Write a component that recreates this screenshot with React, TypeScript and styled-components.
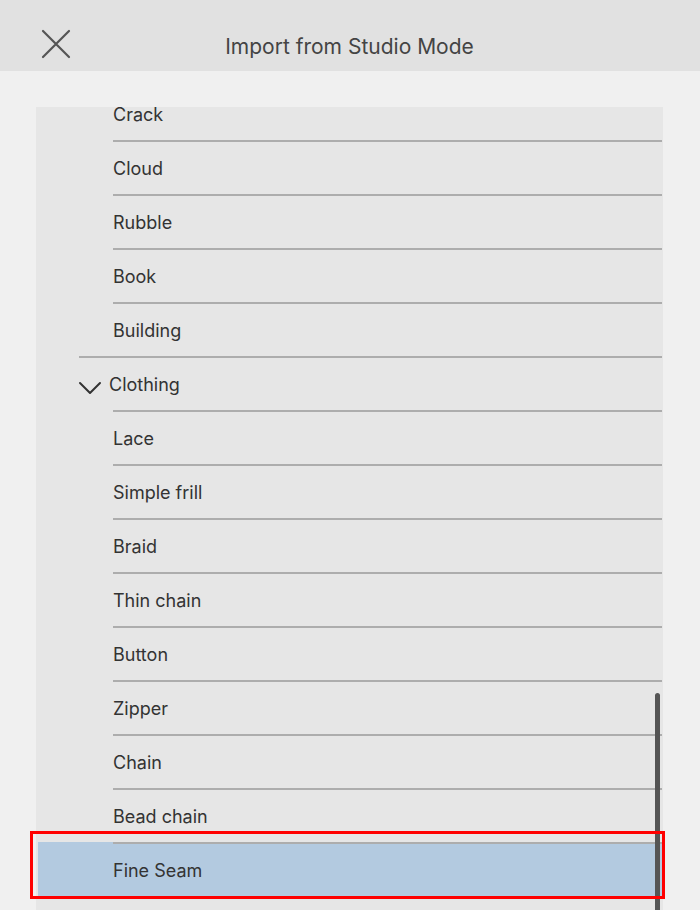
import React from 'react';
import styled, { createGlobalStyle } from 'styled-components';

const GlobalStyle = createGlobalStyle`
  html, body {
    margin: 0;
    padding: 0;
    background: #f0f0f0;
    font-family: Inter, "Noto Sans", "Liberation Sans", sans-serif;
  }
`;

type Item = { label: string; level: 'group' | 'child'; open?: boolean; selected?: boolean };

const items: Item[] = [
  { label: 'Crack', level: 'child' },
  { label: 'Cloud', level: 'child' },
  { label: 'Rubble', level: 'child' },
  { label: 'Book', level: 'child' },
  { label: 'Building', level: 'child' },
  { label: 'Clothing', level: 'group', open: true },
  { label: 'Lace', level: 'child' },
  { label: 'Simple frill', level: 'child' },
  { label: 'Braid', level: 'child' },
  { label: 'Thin chain', level: 'child' },
  { label: 'Button', level: 'child' },
  { label: 'Zipper', level: 'child' },
  { label: 'Chain', level: 'child' },
  { label: 'Bead chain', level: 'child' },
  { label: 'Fine Seam', level: 'child', selected: true },
];

function App() {
  return (
    <Page>
      <GlobalStyle />
      <Header>
        <CloseButton aria-label="Close">
          <svg width="30" height="30" viewBox="0 0 30 30">
            <path d="M2 2 L28 28 M28 2 L2 28" stroke="#555" strokeWidth="2.2" strokeLinecap="round" />
          </svg>
        </CloseButton>
        <Title>Import from Studio Mode</Title>
      </Header>

      <Body>
        <Panel>
          <List>
            {items.map((item) => (
              <Row key={item.label} $selected={item.selected}>
                <Cell $group={item.level === 'group'}>
                  {item.level === 'group' && (
                    <Chevron viewBox="0 0 24 16" width="24" height="16">
                      <path d="M2 3 L12 13 L22 3" fill="none" stroke="#333" strokeWidth="2" strokeLinecap="round" strokeLinejoin="round" />
                    </Chevron>
                  )}
                  <Label>{item.label}</Label>
                </Cell>
              </Row>
            ))}
          </List>
          <ScrollThumb />
        </Panel>
        <Highlight />
      </Body>
    </Page>
  );
}

export default App;

const Page = styled.div`
  display: flex;
  flex-direction: column;
  height: 100vh;
  overflow: hidden;
`;

const Header = styled.div`
  height: 71px;
  flex-shrink: 0;
  box-sizing: border-box;
  padding-top: 22px;
  background: #e1e1e1;
  display: flex;
  align-items: center;
  justify-content: center;
  position: relative;
`;

const CloseButton = styled.div`
  position: absolute;
  left: 41px;
  top: 29px;
  width: 30px;
  height: 30px;
  display: flex;
`;

const Title = styled.div`
  font-size: 21px;
  color: #444;
  margin-left: -1px;
`;

const Body = styled.div`
  flex: 1;
  display: flex;
  padding: 36px 37px 0 36px;
  position: relative;
  min-height: 0;
`;

const Panel = styled.div`
  flex: 1;
  background: #e6e6e6;
  overflow: hidden;
  position: relative;
`;

const List = styled.div`
  display: flex;
  flex-direction: column;
  margin-top: -21px;
`;

const Row = styled.div<{ $selected?: boolean }>`
  height: 54px;
  flex-shrink: 0;
  display: flex;
  padding-left: ${(p) => (p.$selected ? '41px' : '43px')};
  background: ${(p) => (p.$selected ? '#b3cae0' : 'transparent')};
  margin-left: ${(p) => (p.$selected ? '2px' : '0')};
`;

const Cell = styled.div<{ $group?: boolean }>`
  flex: 1;
  display: flex;
  align-items: center;
  gap: 7px;
  margin-left: ${(p) => (p.$group ? '0' : '34px')};
  margin-right: 1px;
  border-top: 2px solid #adadad;
  box-sizing: border-box;
`;

const Chevron = styled.svg`
  margin-top: 8px;
  margin-left: -1px;
  flex-shrink: 0;
`;

const Label = styled.span`
  font-size: 18px;
  color: #333;
`;

const ScrollThumb = styled.div`
  position: absolute;
  right: 3px;
  top: 586px;
  bottom: -20px;
  width: 5px;
  border-radius: 3px;
  background: #555;
`;

const Highlight = styled.div`
  position: absolute;
  left: 30px;
  top: 760px;
  width: 635px;
  height: 68px;
  border: 3px solid #ff0000;
  box-sizing: border-box;
  pointer-events: none;
`;
